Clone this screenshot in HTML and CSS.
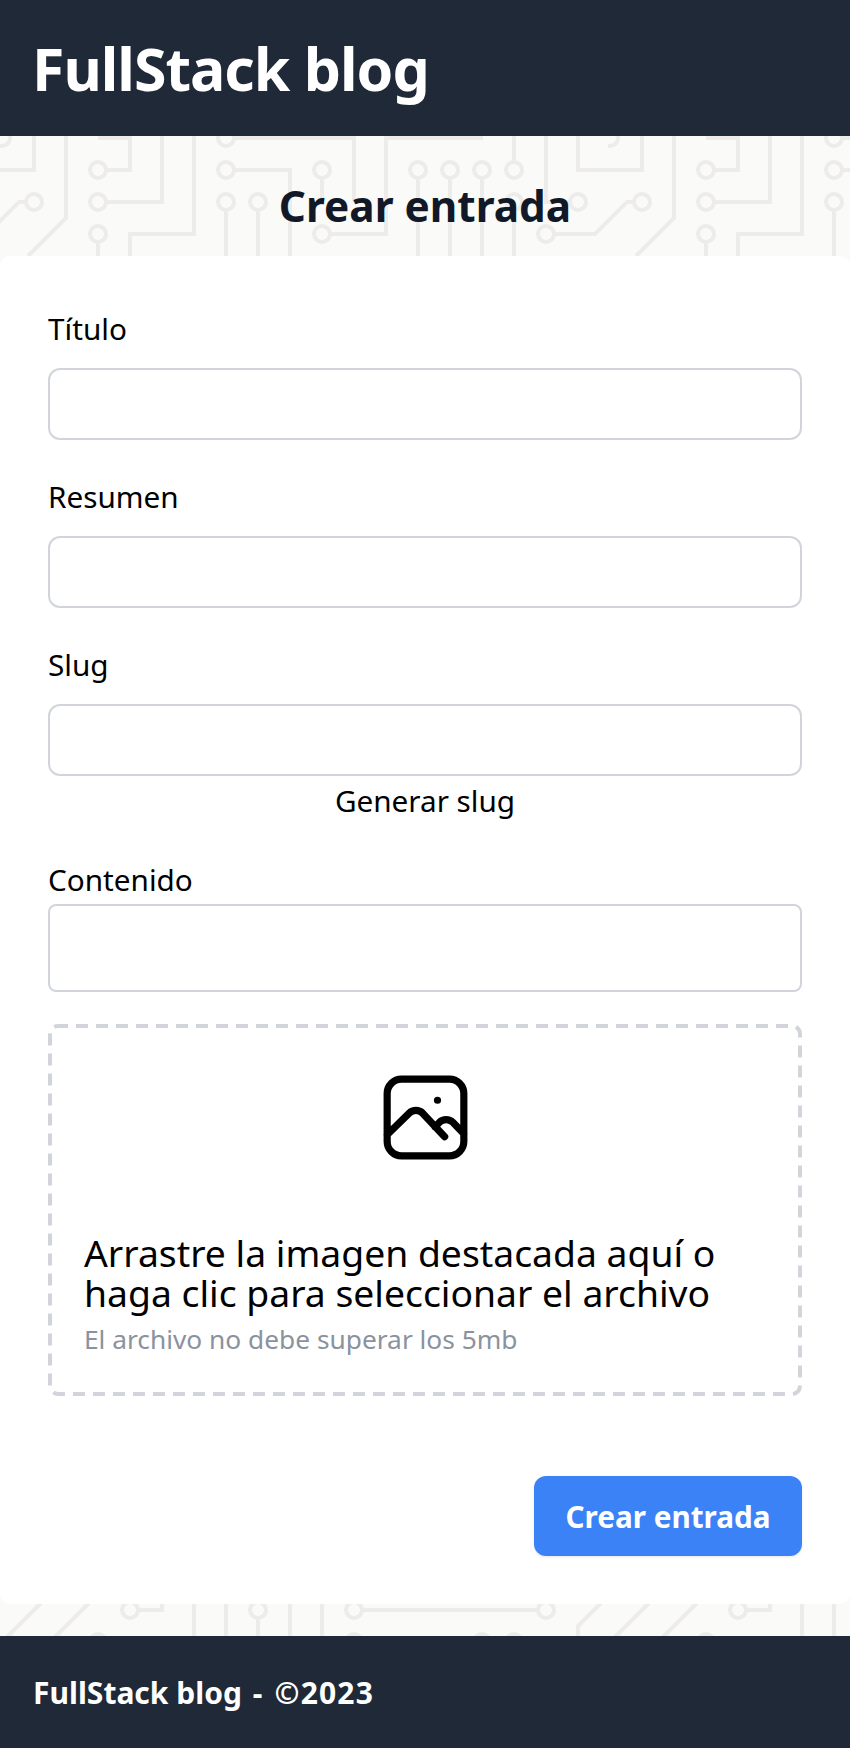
FILE: index.html
```html
<!DOCTYPE html>
<html>
<head>
    <title>Crear entrada - FullStack blog</title>
    <link rel="stylesheet" href="styles.css">
</head>
<body>
    <header class="site-header">
        <a class="brand" href="#">FullStack blog</a>
    </header>

    <main class="page">
        <h2 class="page-title">Crear entrada</h2>

        <form class="card">
            <div class="form-group">
                <label for="title">Título</label>
                <input type="text" id="title">
            </div>

            <div class="form-group">
                <label for="summary">Resumen</label>
                <input type="text" id="summary">
            </div>

            <div class="form-group slug">
                <label for="slug">Slug</label>
                <input type="text" id="slug">
                <button type="button" class="link-button">Generar slug</button>
            </div>

            <div class="form-group content">
                <label for="content">Contenido</label>
                <textarea id="content"></textarea>
            </div>

            <div class="dropzone">
                <svg class="dropzone-border" viewBox="0 0 754 372" fill="none">
                    <rect x="2" y="2" width="750" height="368" rx="8" stroke="#d1d5db" stroke-width="4" stroke-dasharray="12 8" stroke-dashoffset="2"/>
                </svg>
                <svg class="dropzone-icon" viewBox="0 0 24 24" fill="none" stroke="currentColor" stroke-width="1.5" stroke-linecap="round" stroke-linejoin="round">
                    <path d="M4 15.6l4.6-4.5a2 2 0 012.8 0L16 16m-2-2l.9-1a2 2 0 012.8 0L20 15.4M14.5 8.4h.01M7 20h10a3 3 0 003-3V7a3 3 0 00-3-3H7a3 3 0 00-3 3v10a3 3 0 003 3z"/>
                </svg>
                <p class="dropzone-text">Arrastre la imagen destacada aquí o haga clic para seleccionar el archivo</p>
                <p class="dropzone-hint">El archivo no debe superar los 5mb</p>
            </div>

            <div class="actions">
                <button type="button" class="button">Crear entrada</button>
            </div>
        </form>
    </main>

    <footer class="site-footer">
        <p>FullStack blog <span class="copy">- ©2023</span></p>
    </footer>
</body>
</html>
```

FILE: styles.css
```css
* {
    box-sizing: border-box;
}
body {
    margin: 0;
    font-family: "Noto Sans", "Open Sans", sans-serif;
    color: #000;
    background-color: #fff;
}
.site-header {
    height: 136px;
    padding: 0 32px;
    display: flex;
    align-items: center;
    background-color: #1f2937;
}
.brand {
    color: #fff;
    font-size: 59px;
    font-weight: 700;
    letter-spacing: -1px;
    text-decoration: none;
}
.page {
    background-color: #fafaf8;
    background-image: url("data:image/svg+xml,%3Csvg xmlns='http://www.w3.org/2000/svg' xmlns:xlink='http://www.w3.org/1999/xlink' width='608' height='304'%3E%3Cdefs%3E%3Cg id='a' fill='none' stroke='%23edecea' stroke-width='4'%3E%3Cpath d='M578 0V34H642V0M66 0V82L28 120M98 2H130V34H106M106 66H162V0M98 106V120M194 0V98H130V120M234 2H354V66M234 34H290V120M226 74V120M258 74V120M322 42V66M483 2H386V98H330M418 42V120M450 42V120M482 42V120M514 26V0M514 74V120M546 0V66H570M554 98H595L627 66H634M42 250L6 286M90 250L54 286M138 258H162V250M194 250V304M226 250V304M290 250V304M322 250V304M258 266V304M362 258H538M602 250L578 274V304'/%3E%3Ccircle cx='2' cy='2' r='8'/%3E%3Ccircle cx='98' cy='34' r='8'/%3E%3Ccircle cx='98' cy='66' r='8'/%3E%3Ccircle cx='98' cy='98' r='8'/%3E%3Ccircle cx='226' cy='2' r='8'/%3E%3Ccircle cx='226' cy='34' r='8'/%3E%3Ccircle cx='226' cy='66' r='8'/%3E%3Ccircle cx='258' cy='66' r='8'/%3E%3Ccircle cx='322' cy='34' r='8'/%3E%3Ccircle cx='322' cy='98' r='8'/%3E%3Ccircle cx='418' cy='34' r='8'/%3E%3Ccircle cx='450' cy='34' r='8'/%3E%3Ccircle cx='482' cy='34' r='8'/%3E%3Ccircle cx='514' cy='34' r='8'/%3E%3Ccircle cx='514' cy='66' r='8'/%3E%3Ccircle cx='578' cy='66' r='8'/%3E%3Ccircle cx='546' cy='98' r='8'/%3E%3Ccircle cx='642' cy='66' r='8'/%3E%3Ccircle cx='130' cy='258' r='8'/%3E%3Ccircle cx='258' cy='258' r='8'/%3E%3Ccircle cx='354' cy='258' r='8'/%3E%3Ccircle cx='546' cy='258' r='8'/%3E%3Ccircle cx='98' cy='290' r='8'/%3E%3Ccircle cx='354' cy='290' r='8'/%3E%3Ccircle cx='482' cy='290' r='8'/%3E%3Ccircle cx='514' cy='290' r='8'/%3E%3C/g%3E%3C/defs%3E%3Cuse xlink:href='%23a'/%3E%3Cuse xlink:href='%23a' x='-608'/%3E%3C/svg%3E");
    background-size: 608px 304px;
    padding-bottom: 32px;
}
.page-title {
    height: 120px;
    margin: 0;
    padding-top: 40px;
    text-align: center;
    color: #111827;
    font-size: 42.3px;
    line-height: 60px;
    font-weight: 700;
}
.card {
    height: 1348px;
    padding: 53px 48px 0;
    background-color: #fff;
    border-radius: 10px;
}
.form-group {
    margin-bottom: 37px;
}
.form-group label {
    display: block;
    margin-bottom: 19px;
    font-size: 29.7px;
    line-height: 40px;
}
.form-group input, .form-group textarea {
    display: block;
    width: 100%;
    height: 72px;
    border: 2px solid #d1d5db;
    border-radius: 12px;
    background-color: #fff;
}
.form-group.slug {
    margin-bottom: 39px;
}
.link-button {
    display: block;
    margin: 5px auto 0;
    padding: 0;
    border: none;
    background: none;
    color: #000;
    font: inherit;
    font-size: 29.7px;
    line-height: 40px;
}
.form-group.content {
    margin-bottom: 32px;
}
.form-group.content label {
    margin-bottom: 4px;
}
.content textarea {
    height: 88px;
    border-radius: 8px;
    resize: none;
}
.dropzone {
    position: relative;
    height: 372px;
    padding: 36px 36px 0;
}
.dropzone-border {
    position: absolute;
    top: 0;
    left: 0;
    width: 100%;
    height: 100%;
}
.dropzone-icon {
    display: block;
    width: 115px;
    height: 115px;
    margin: 0 auto 58px;
    color: #000;
}
.dropzone-text {
    margin: 0;
    font-size: 37.3px;
    line-height: 40px;
}
.dropzone-hint {
    margin: 9px 0 0;
    color: #8a929e;
    font-size: 26.3px;
    line-height: 34px;
}
.actions {
    margin-top: 80px;
    display: flex;
    justify-content: flex-end;
}
.button {
    width: 268px;
    height: 80px;
    border: none;
    border-radius: 12px;
    background-color: #3b82f6;
    box-shadow: 0 1px 3px rgba(0,0,0,0.1);
    color: #fff;
    font: inherit;
    font-size: 29.7px;
    font-weight: 700;
}
.site-footer {
    height: 112px;
    padding: 0 33px;
    display: flex;
    align-items: center;
    background-color: #1f2937;
    color: #fff;
    font-size: 30px;
    font-weight: 700;
}
.site-footer p {
    margin: 0;
}
.copy {
    margin-left: 3px;
    letter-spacing: 1.2px;
    word-spacing: 2px;
}
```
